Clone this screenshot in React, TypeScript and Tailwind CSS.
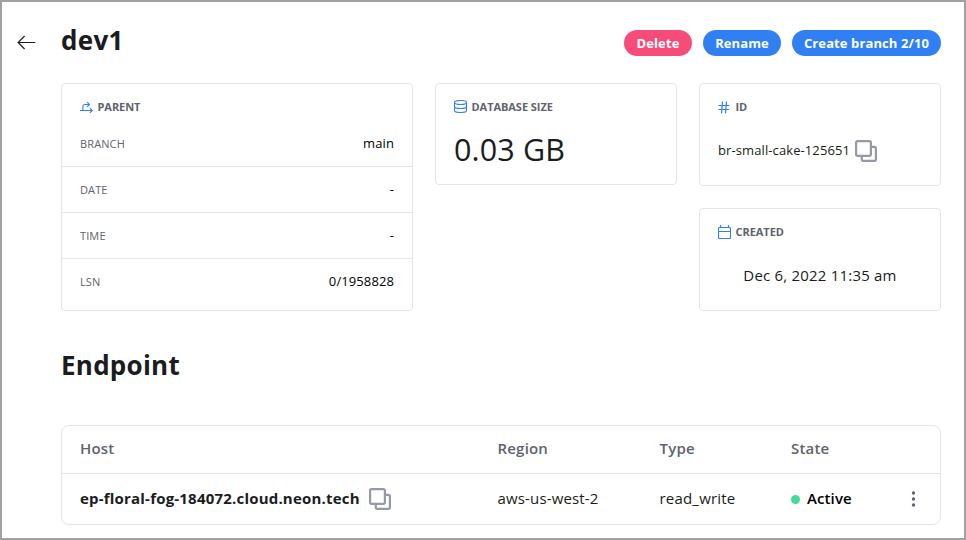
import type { ReactNode } from "react";

function CopyIcon() {
  return (
    <svg width="22" height="22" viewBox="0 0 22 22" fill="none" stroke="#9499a3" strokeWidth="2.2" className="shrink-0">
      <rect x="1.1" y="1.1" width="14.8" height="14.8" rx="1.6" />
      <path d="M16 6.8H19.2Q20.9 6.8 20.9 8.5V19.2Q20.9 20.9 19.2 20.9H8.5Q6.8 20.9 6.8 19.2V16" />
    </svg>
  );
}

function BranchIcon() {
  return (
    <svg width="13" height="13" viewBox="0 0 13 13" fill="none" stroke="#3080f4" strokeWidth="1.1">
      <path d="M0 9.5H12M9.8 7.2L12.2 9.5L9.8 11.8M2.9 9.5V5.5Q2.9 3.5 5 3.5H9M7.2 1.2L9.5 3.5L7.2 5.8" />
    </svg>
  );
}

function DatabaseIcon() {
  return (
    <svg width="13" height="13" viewBox="0 0 13 13" fill="none" stroke="#3080f4" strokeWidth="1.1" className="-mt-px">
      <ellipse cx="6.5" cy="2.5" rx="6" ry="2" />
      <path d="M.5 2.5V10.5C.5 11.8 3 12.5 6.5 12.5S12.5 11.8 12.5 10.5V2.5M.5 6.5C.5 7.8 3 8.5 6.5 8.5S12.5 7.8 12.5 6.5" />
    </svg>
  );
}

function HashIcon() {
  return (
    <svg width="12" height="13" viewBox="0 0 12 13" fill="none" stroke="#3080f4" strokeWidth="1.2">
      <path d="M.5 4.5H11.5M.5 8.5H11M4.5 .5L3.5 12.5M8.5 .5L7.5 12.5" />
    </svg>
  );
}

function CalendarIcon() {
  return (
    <svg width="13" height="14" viewBox="0 0 13 14" fill="none" stroke="#3080f4" strokeWidth="1.1">
      <rect x=".5" y="2.5" width="12" height="11" rx="1" />
      <path d="M.5 6.5H12.5M2.5 0V2.5M10.5 0V2.5" />
    </svg>
  );
}

function CardTitle({ icon, children }: { icon: ReactNode; children: ReactNode }) {
  return (
    <div className="flex h-4 items-center text-[11px] font-bold tracking-[-0.05px] text-[#60636d]">
      <span className="flex w-[17.5px] shrink-0">{icon}</span>
      {children}
    </div>
  );
}

function Detail({ label, value }: { label: string; value: string }) {
  return (
    <div className="flex h-[46px] items-center justify-between border-b border-[#e4e5e7] px-[18px] pt-[1px] last:border-b-0 last:pt-0">
      <span className="text-[11px] tracking-[0.12px] text-[#60636d]">{label}</span>
      <span className="text-[13px] tracking-[0.1px] text-black">{value}</span>
    </div>
  );
}

export default function App() {
  return (
    <div className="h-[540px] w-[966px] overflow-hidden border-2 border-[#a0a0a0] bg-white font-['Open_Sans','Noto_Sans',sans-serif] text-[#1a1c20]">
      <header className="flex h-[81px] items-start pr-[23px] pl-[15px]">
        <svg width="19" height="15" viewBox="0 0 19 15" fill="none" stroke="#1a1c20" strokeWidth="1.2" className="mt-[33px]">
          <path d="M18.3 7.5H1.1M7.6 1L1.1 7.5L7.6 14" />
        </svg>
        <h1 className="mt-[20px] ml-[25px] flex-1 text-[26px] leading-[36px] font-bold tracking-[0.3px]">dev1</h1>
        <div className="mt-7 flex gap-[11px] text-[13px] leading-[26px] font-bold tracking-[0.1px] text-white">
          <button className="h-[26px] w-[68px] rounded-full bg-[#f64c7a]">Delete</button>
          <button className="h-[26px] w-[78px] rounded-full bg-[#3080f4]">Rename</button>
          <button className="h-[26px] w-[149px] rounded-full bg-[#3080f4] whitespace-nowrap">Create branch 2/10</button>
        </div>
      </header>

      <main className="pr-[23px] pl-[59px]">
        <section className="grid grid-cols-[352px_242px_242px] items-start gap-[22px]">
          <div className="h-[228px] rounded border border-[#e4e5e7] pt-[15px]">
            <div className="mb-[6px] px-[18px]">
              <CardTitle icon={<BranchIcon />}>PARENT</CardTitle>
            </div>
            <Detail label="BRANCH" value="main" />
            <Detail label="DATE" value="-" />
            <Detail label="TIME" value="-" />
            <Detail label="LSN" value="0/1958828" />
          </div>
          <div className="h-[102px] rounded border border-[#e4e5e7] px-[18px] pt-[15px]">
            <CardTitle icon={<DatabaseIcon />}>DATABASE SIZE</CardTitle>
            <p className="mt-[14px] text-[30.5px] leading-[40px] tracking-[0.15px]">0.03 GB</p>
          </div>
          <div className="flex flex-col gap-[22px]">
            <div className="h-[103px] rounded border border-[#e4e5e7] px-[18px] pt-[15px]">
              <CardTitle icon={<HashIcon />}>ID</CardTitle>
              <div className="mt-[25px] flex h-[22px] items-center gap-[5px] text-[13px] tracking-[0.1px]">
                <span>br-small-cake-125651</span>
                <CopyIcon />
              </div>
            </div>
            <div className="h-[103px] rounded border border-[#e4e5e7] px-[18px] pt-[15px]">
              <CardTitle icon={<CalendarIcon />}>CREATED</CardTitle>
              <p className="mt-[24px] text-center text-[15px] leading-[22px] tracking-[0.2px]">Dec 6, 2022 11:35 am</p>
            </div>
          </div>
        </section>

        <h2 className="mt-[36px] text-[26px] leading-[36px] font-bold tracking-[0.25px]">Endpoint</h2>

        <section className="mt-[42px] h-[100px] rounded-lg border border-[#e4e5e7] text-[15px] tracking-[0.2px]">
          <div className="grid h-[48px] grid-cols-[417.5px_162px_131.5px_1fr] items-center border-b border-[#e4e5e7] pr-[18px] pb-[2px] pl-[18px] font-semibold text-[#60636d]">
            <span>Host</span>
            <span>Region</span>
            <span>Type</span>
            <span>State</span>
          </div>
          <div className="grid h-[50px] grid-cols-[417.5px_162px_131.5px_1fr] items-center pr-[24px] pl-[18px]">
            <div className="flex items-center gap-[9px] font-bold">
              <span className="-mt-[2px]">ep-floral-fog-184072.cloud.neon.tech</span>
              <CopyIcon />
            </div>
            <span className="-mt-[2px] tracking-[0.15px]">aws-us-west-2</span>
            <span className="-mt-[2px]">read_write</span>
            <div className="flex items-center font-semibold">
              <span className="mr-[7px] size-[9px] rounded-full bg-[#45db94]" />
              <span className="-mt-[2px] tracking-[0.1px] text-black">Active</span>
              <svg width="5" height="18" viewBox="0 0 5 18" fill="#60636d" className="ml-auto">
                <circle cx="2.5" cy="3" r="1.7" />
                <circle cx="2.5" cy="9" r="1.7" />
                <circle cx="2.5" cy="15" r="1.7" />
              </svg>
            </div>
          </div>
        </section>
      </main>
    </div>
  );
}
